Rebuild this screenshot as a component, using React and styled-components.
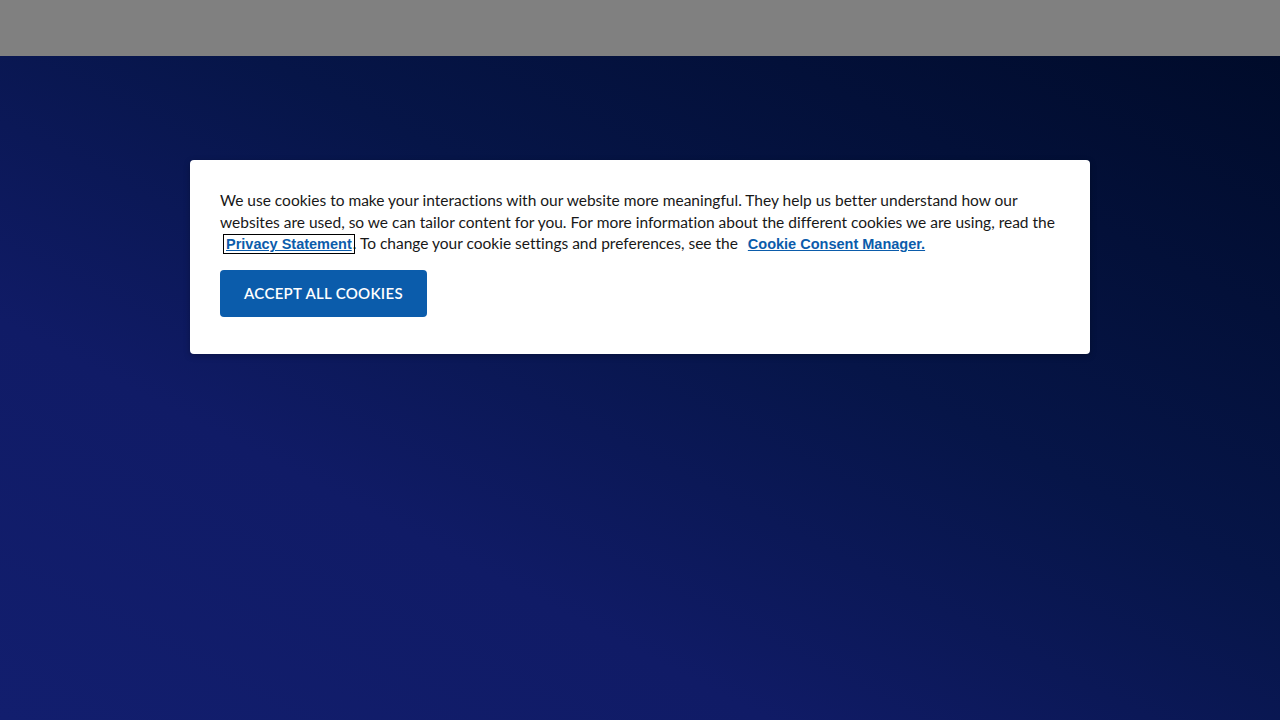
import React from "react";
import styled, { createGlobalStyle } from "styled-components";

const GlobalStyle = createGlobalStyle`
  html, body {
    margin: 0;
    padding: 0;
    height: 100%;
  }
  #root {
    height: 100%;
  }
`;

const CookieScreen = () => {
  return (
    <Page>
      <GlobalStyle />
      <TopBar />
      <Backdrop>
        <Banner>
          <Message>
            We use cookies to make your interactions with our website more
            meaningful. They help us better understand how our websites are
            used, so we can tailor content for you. For more information about
            the different cookies we are using, read the{" "}
            <PolicyLink href="#" $focused>
              Privacy Statement
            </PolicyLink>
            . To change your cookie settings and preferences, see the{" "}
            <PolicyLink href="#">Cookie Consent Manager.</PolicyLink>
          </Message>
          <AcceptButton>Accept All Cookies</AcceptButton>
        </Banner>
      </Backdrop>
    </Page>
  );
};

const Page = styled.div`
  display: flex;
  flex-direction: column;
  height: 100vh;
  overflow: hidden;
`;

const TopBar = styled.div`
  height: 56px;
  flex-shrink: 0;
  background-color: #808080;
`;

const Backdrop = styled.div`
  flex: 1;
  padding-top: 104px;
  background: linear-gradient(
    to top right,
    #121e6e 0%,
    #101b66 30%,
    #061548 60%,
    #000b2a 100%
  );
`;

const Banner = styled.div`
  width: 900px;
  box-sizing: border-box;
  margin: 0 auto;
  padding: 30px 30px 37px;
  background-color: white;
  border-radius: 4px;
  box-shadow: 0 2px 6px rgba(0, 0, 0, 0.25);
`;

const Message = styled.p`
  margin: 0;
  font-family: "Lato", "Noto Sans", sans-serif;
  font-size: 15.5px;
  line-height: 21.5px;
  font-variant-ligatures: none;
  color: #181818;
`;

const PolicyLink = styled.a`
  font-family: "Liberation Sans", Arial, sans-serif;
  font-size: 14.5px;
  font-weight: bold;
  color: #0b5cab;
  text-decoration: underline;
  margin-left: 5px;
  outline: ${(p) => (p.$focused ? "1px solid #000" : "none")};
  outline-offset: 1px;
  padding: 0 1px;
`;

const AcceptButton = styled.button`
  display: block;
  margin-top: 14px;
  width: 207px;
  height: 47px;
  border: none;
  border-radius: 4px;
  background-color: #0b5cab;
  color: white;
  font-family: "Lato", "Noto Sans", sans-serif;
  font-size: 15px;
  font-weight: 600;
  letter-spacing: 0.3px;
  text-transform: uppercase;
  cursor: pointer;
`;

export default CookieScreen;
